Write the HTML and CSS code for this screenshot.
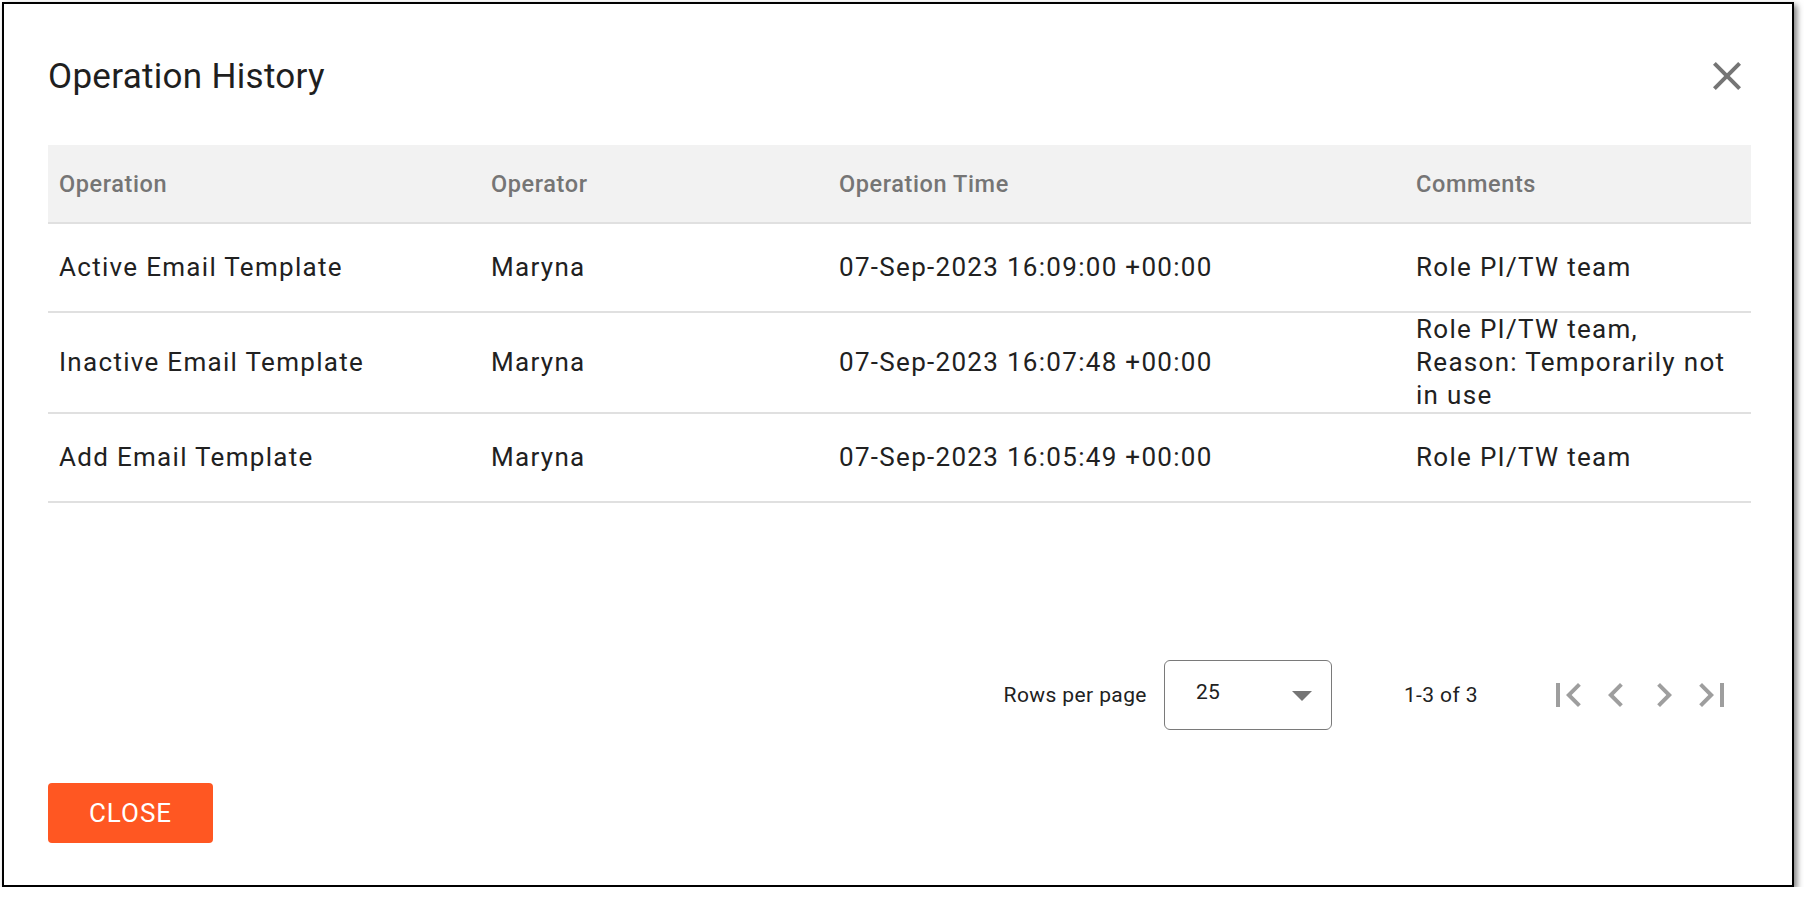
FILE: index.html
```html
<!DOCTYPE html>
<html lang="en">
<head>
    <meta charset="UTF-8">
    <meta name="viewport" content="width=device-width, initial-scale=1.0">
    <title>Operation History</title>
    <link rel="stylesheet" href="styles.css">
</head>
<body>
    <div class="dialog">
        <div class="dialog-header">
            <h2 class="dialog-title">Operation History</h2>
            <button class="icon-btn close-btn" aria-label="Close">
                <svg viewBox="0 0 24 24" width="48" height="48"><path d="M19 6.41L17.59 5 12 10.59 6.41 5 5 6.41 10.59 12 5 17.59 6.41 19 12 13.41 17.59 19 19 17.59 13.41 12z"/></svg>
            </button>
        </div>

        <table class="history-table">
            <thead>
                <tr>
                    <th class="col-op">Operation</th>
                    <th class="col-user">Operator</th>
                    <th class="col-time">Operation Time</th>
                    <th class="col-comment">Comments</th>
                </tr>
            </thead>
            <tbody>
                <tr>
                    <td>Active Email Template</td>
                    <td>Maryna</td>
                    <td>07-Sep-2023 16:09:00 +00:00</td>
                    <td>Role PI/TW team</td>
                </tr>
                <tr>
                    <td>Inactive Email Template</td>
                    <td>Maryna</td>
                    <td>07-Sep-2023 16:07:48 +00:00</td>
                    <td>Role PI/TW team, Reason: Temporarily not in use</td>
                </tr>
                <tr>
                    <td>Add Email Template</td>
                    <td>Maryna</td>
                    <td>07-Sep-2023 16:05:49 +00:00</td>
                    <td>Role PI/TW team</td>
                </tr>
            </tbody>
        </table>

        <div class="pagination">
            <span class="rows-label">Rows per page</span>
            <div class="rows-select">
                <span>25</span>
                <svg viewBox="0 0 24 24" width="48" height="48"><path d="M7 10l5 5 5-5z"/></svg>
            </div>
            <span class="range">1-3 of 3</span>
            <div class="pager">
                <button class="icon-btn" disabled>
                    <svg viewBox="0 0 24 24" width="48" height="48"><path d="M18.41 16.59L13.82 12l4.59-4.59L17 6l-6 6 6 6zM6 6h2v12H6z"/></svg>
                </button>
                <button class="icon-btn" disabled>
                    <svg viewBox="0 0 24 24" width="48" height="48"><path d="M15.41 7.41L14 6l-6 6 6 6 1.41-1.41L10.83 12z"/></svg>
                </button>
                <button class="icon-btn" disabled>
                    <svg viewBox="0 0 24 24" width="48" height="48"><path d="M10 6L8.59 7.41 13.17 12l-4.58 4.59L10 18l6-6z"/></svg>
                </button>
                <button class="icon-btn" disabled>
                    <svg viewBox="0 0 24 24" width="48" height="48"><path d="M5.59 7.41L10.18 12l-4.59 4.59L7 18l6-6-6-6zM16 6h2v12h-2z"/></svg>
                </button>
            </div>
        </div>

        <div class="dialog-actions">
            <button class="btn-close">Close</button>
        </div>
    </div>
</body>
</html>
```

FILE: styles.css
```css
body {
    margin: 0;
    background: #fff;
    font-family: Roboto, "Noto Sans", Arial, sans-serif;
    color: rgba(0, 0, 0, 0.87);
}
.dialog {
    box-sizing: border-box;
    width: 1792px;
    height: 885px;
    margin: 2px 0 0 2px;
    border: 2px solid #000;
    box-shadow: 3px 3px 6px rgba(0, 0, 0, 0.5);
    padding: 48px 41px 0 44px;
    display: flex;
    flex-direction: column;
}
.dialog-header {
    display: flex;
    align-items: center;
    justify-content: space-between;
    height: 48px;
}
.dialog-title {
    margin: 0;
    font-size: 35px;
    font-weight: 400;
    letter-spacing: 0.3px;
    color: #1f1f1f;
}
.icon-btn {
    border: 0;
    padding: 0;
    background: none;
    width: 48px;
    height: 48px;
    display: flex;
}
.close-btn svg {
    fill: #757575;
}
.history-table {
    margin-top: 45px;
    width: 1703px;
    border-collapse: collapse;
    table-layout: fixed;
    text-align: left;
}
.col-op { width: 410px; }
.col-user { width: 326px; }
.col-time { width: 555px; }
.col-comment { width: 324px; }
th, td {
    padding: 0 11px;
    border-bottom: 2px solid #e0e0e0;
    vertical-align: middle;
}
th {
    height: 77px;
    background: #f2f2f2;
    color: #757575;
    font-size: 23.5px;
    font-weight: 500;
    letter-spacing: 0.6px;
}
td {
    height: 87px;
    font-size: 26px;
    line-height: 33px;
    letter-spacing: 1.3px;
    color: #212121;
}
.pagination {
    display: flex;
    align-items: center;
    justify-content: flex-end;
    margin-top: 157px;
    padding-right: 15px;
    font-size: 21px;
    letter-spacing: 0.4px;
    color: #212121;
}
.rows-select {
    box-sizing: border-box;
    width: 168px;
    height: 70px;
    margin-left: 17px;
    border: 1.5px solid #7a7a7a;
    border-radius: 6px;
    display: flex;
    align-items: center;
    justify-content: space-between;
    padding: 0 5px 6px 31px;
}
.rows-select svg {
    fill: #757575;
    margin-top: 6px;
}
.range {
    margin-left: 72px;
}
.pager {
    display: flex;
    margin-left: 66px;
}
.pager svg {
    fill: #9e9e9e;
}
.dialog-actions {
    margin-top: 53px;
}
.btn-close {
    width: 165px;
    height: 60px;
    border: 0;
    border-radius: 4px;
    background: #ff5722;
    color: #fff;
    font-family: Roboto, Arial, sans-serif;
    font-size: 26px;
    font-weight: 400;
    text-transform: uppercase;
    letter-spacing: 1px;
}
```
